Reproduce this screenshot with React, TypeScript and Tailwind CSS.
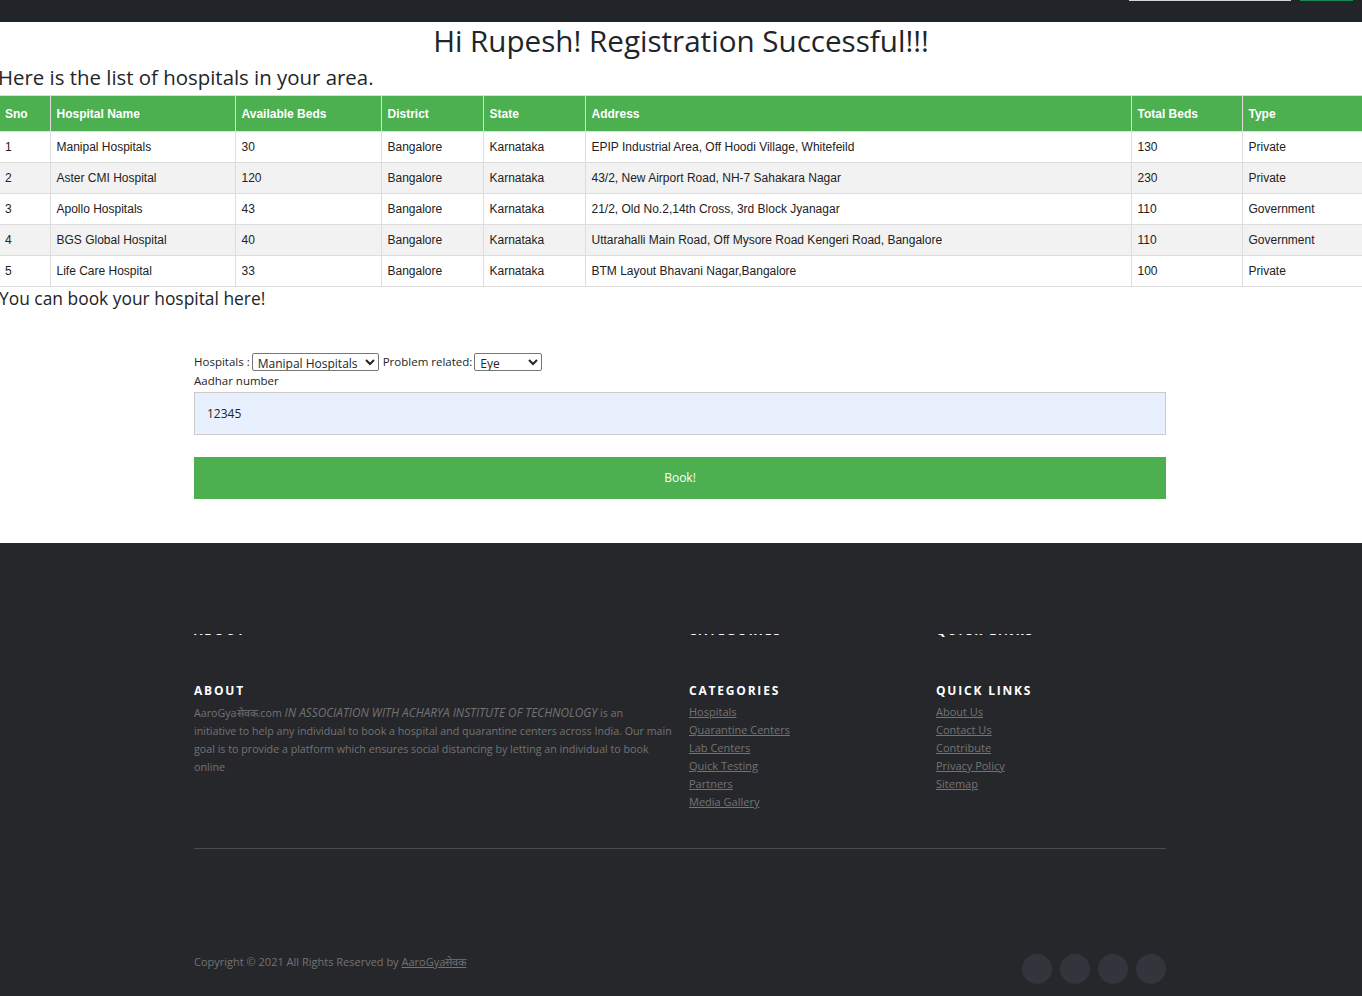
import React from "react";

const HOSPITALS = [
  { sno: 1, name: "Manipal Hospitals",   beds: 30,  district: "Bangalore", state: "Karnataka", address: "EPIP Industrial Area, Off Hoodi Village, Whitefeild",                 total: 130, type: "Private"    },
  { sno: 2, name: "Aster CMI Hospital",  beds: 120, district: "Bangalore", state: "Karnataka", address: "43/2, New Airport Road, NH-7 Sahakara Nagar",                         total: 230, type: "Private"    },
  { sno: 3, name: "Apollo Hospitals",    beds: 43,  district: "Bangalore", state: "Karnataka", address: "21/2, Old No.2,14th Cross, 3rd Block Jyanagar",                      total: 110, type: "Government" },
  { sno: 4, name: "BGS Global Hospital", beds: 40,  district: "Bangalore", state: "Karnataka", address: "Uttarahalli Main Road, Off Mysore Road Kengeri Road, Bangalore",     total: 110, type: "Government" },
  { sno: 5, name: "Life Care Hospital",  beds: 33,  district: "Bangalore", state: "Karnataka", address: "BTM Layout Bhavani Nagar,Bangalore",                                 total: 100, type: "Private"    },
];

const HEADERS = ["Sno", "Hospital Name", "Available Beds", "District", "State", "Address", "Total Beds", "Type"];
const WIDTHS  = ["w-[50px]", "w-[185px]", "w-[146px]", "w-[102px]", "w-[102px]", "w-[546px]", "w-[111px]", "w-[120px]"];

const CATEGORIES  = ["Hospitals", "Quarantine Centers", "Lab Centers", "Quick Testing", "Partners", "Media Gallery"];
const QUICK_LINKS = ["About Us", "Contact Us", "Contribute", "Privacy Policy", "Sitemap"];

const sans  = "font-['Open_Sans',sans-serif]";
const arial = "font-['Liberation_Sans',Arial,sans-serif]";

function ClippedHeading({ children }: { children: React.ReactNode }) {
  return (
    <div className="h-[3px] overflow-hidden">
      <p className="-mt-[10px] text-[12px] font-bold tracking-[2px] text-white leading-[13px]">{children}</p>
    </div>
  );
}

function FooterHeading({ children }: { children: React.ReactNode }) {
  return <h6 className="text-[12px] font-bold tracking-[1.8px] text-white leading-[16px] mb-[4px]">{children}</h6>;
}

export default function App() {
  return (
    <div className={`min-h-screen bg-white text-[#212529] ${sans}`}>

      {/* ── Navbar (scrolled, only its foot is visible) ── */}
      <nav className="h-[22px] bg-[#212529] flex items-start justify-end pr-[9px] gap-[9px]">
        <div className="w-[162px] h-[1px] bg-[#ced4da]" />
        <div className="w-[53px] h-[1px] bg-[#198754]" />
      </nav>

      <h2 className="text-center text-[29.6px] leading-[40px] -mt-[1px] text-[#212529]">
        Hi Rupesh! Registration Successful!!!
      </h2>
      <h4 className="text-[20.4px] leading-[30px] mt-[1px] -ml-[2px]">Here is the list of hospitals in your area.</h4>

      {/* ── Hospitals table ── */}
      <table className={`w-full table-fixed border-collapse text-[12px] ${arial} mt-[3px]`}>
        <colgroup>
          {WIDTHS.map((w, i) => <col key={i} className={w} />)}
        </colgroup>
        <thead>
          <tr className="bg-[#4CAF50] text-white h-[36px]">
            {HEADERS.map((h, j) => (
              <th key={h}
                className={`border border-[#ddd] text-left font-bold pt-[1px] ${j === 0 ? "border-l-0 pl-[5px]" : "px-[6px]"}`}>
                {h}
              </th>
            ))}
          </tr>
        </thead>
        <tbody>
          {HOSPITALS.map((r, i) => (
            <tr key={r.sno} className={`h-[31px] ${i % 2 === 1 ? "bg-[#f2f2f2]" : "bg-white"}`}>
              {[r.sno, r.name, r.beds, r.district, r.state, r.address, r.total, r.type].map((c, j) => (
                <td key={j}
                  className={`border border-[#ddd] text-[#222] ${j === 0 ? "border-l-0 pl-[5px]" : "px-[6px]"}`}>
                  {c}
                </td>
              ))}
            </tr>
          ))}
        </tbody>
      </table>

      <h5 className="text-[17.4px] leading-[22px] -ml-[1px]">You can book your hospital here!</h5>

      {/* ── Booking form ── */}
      <form className="w-[972px] ml-[194px] mt-[44px] pb-[44px] text-[11.5px]">
        <div className="flex items-center h-[18px] gap-[2px]">
          <label>Hospitals :</label>
          <select defaultValue="Manipal Hospitals"
            className="h-[18px] w-[127px] border border-[#767676] rounded-[2px] text-[12px] px-[1px] bg-white">
            <option>Manipal Hospitals</option>
            <option>Aster CMI Hospital</option>
            <option>Apollo Hospitals</option>
          </select>
          <label className="ml-[2px]">Problem related:</label>
          <select defaultValue="Eye"
            className="h-[18px] w-[68px] border border-[#767676] rounded-[2px] text-[12px] px-[1px] bg-white">
            <option>Eye</option>
            <option>Heart</option>
          </select>
        </div>
        <label className="block leading-[18px] mt-[1px]">Aadhar number</label>
        <input readOnly value="12345"
          className="block w-full h-[43px] mt-[2px] bg-[#e8f0fe] border border-[#ccc] px-[12px] text-[12px] outline-none" />
        <button type="button"
          className="block w-full h-[42px] mt-[22px] bg-[#4CAF50] text-white text-[12px]">
          Book!
        </button>
      </form>

      {/* ── Footer ── */}
      <footer className="bg-[#26272b] h-[453px] pt-[91px] text-[11px] text-[#737373]">
        <div className="w-[972px] ml-[194px]">
          <div className="grid grid-cols-[495px_247px_1fr]">
            <ClippedHeading>ABOUT</ClippedHeading>
            <ClippedHeading>CATEGORIES</ClippedHeading>
            <ClippedHeading>QUICK LINKS</ClippedHeading>
          </div>

          <div className="grid grid-cols-[495px_247px_1fr] mt-[46px]">
            <div>
              <FooterHeading>ABOUT</FooterHeading>
              <p className="leading-[18px] whitespace-nowrap text-[10.7px]">
                AaroGyaसेवक.com <i className="text-[11.8px]">IN ASSOCIATION WITH ACHARYA INSTITUTE OF TECHNOLOGY</i> is an<br />
                initiative to help any individual to book a hospital and quarantine centers across India. Our main<br />
                goal is to provide a platform which ensures social distancing by letting an individual to book<br />
                online
              </p>
            </div>
            <div>
              <FooterHeading>CATEGORIES</FooterHeading>
              <ul className="leading-[18px]">
                {CATEGORIES.map((c) => <li key={c}><a className="underline">{c}</a></li>)}
              </ul>
            </div>
            <div>
              <FooterHeading>QUICK LINKS</FooterHeading>
              <ul className="leading-[18px]">
                {QUICK_LINKS.map((c) => <li key={c}><a className="underline">{c}</a></li>)}
              </ul>
            </div>
          </div>

          <hr className="mt-[37px] border-0 border-t border-[#4a4b4f]" />

          <div className="flex items-center justify-between mt-[91px]">
            <p>Copyright © 2021 All Rights Reserved by <a className="underline">AaroGyaसेवक</a></p>
            <div className="flex gap-[8px] mt-[14px]">
              {[0, 1, 2, 3].map((i) => <span key={i} className="w-[30px] h-[30px] rounded-full bg-[#33353d]" />)}
            </div>
          </div>
        </div>
      </footer>
    </div>
  );
}
